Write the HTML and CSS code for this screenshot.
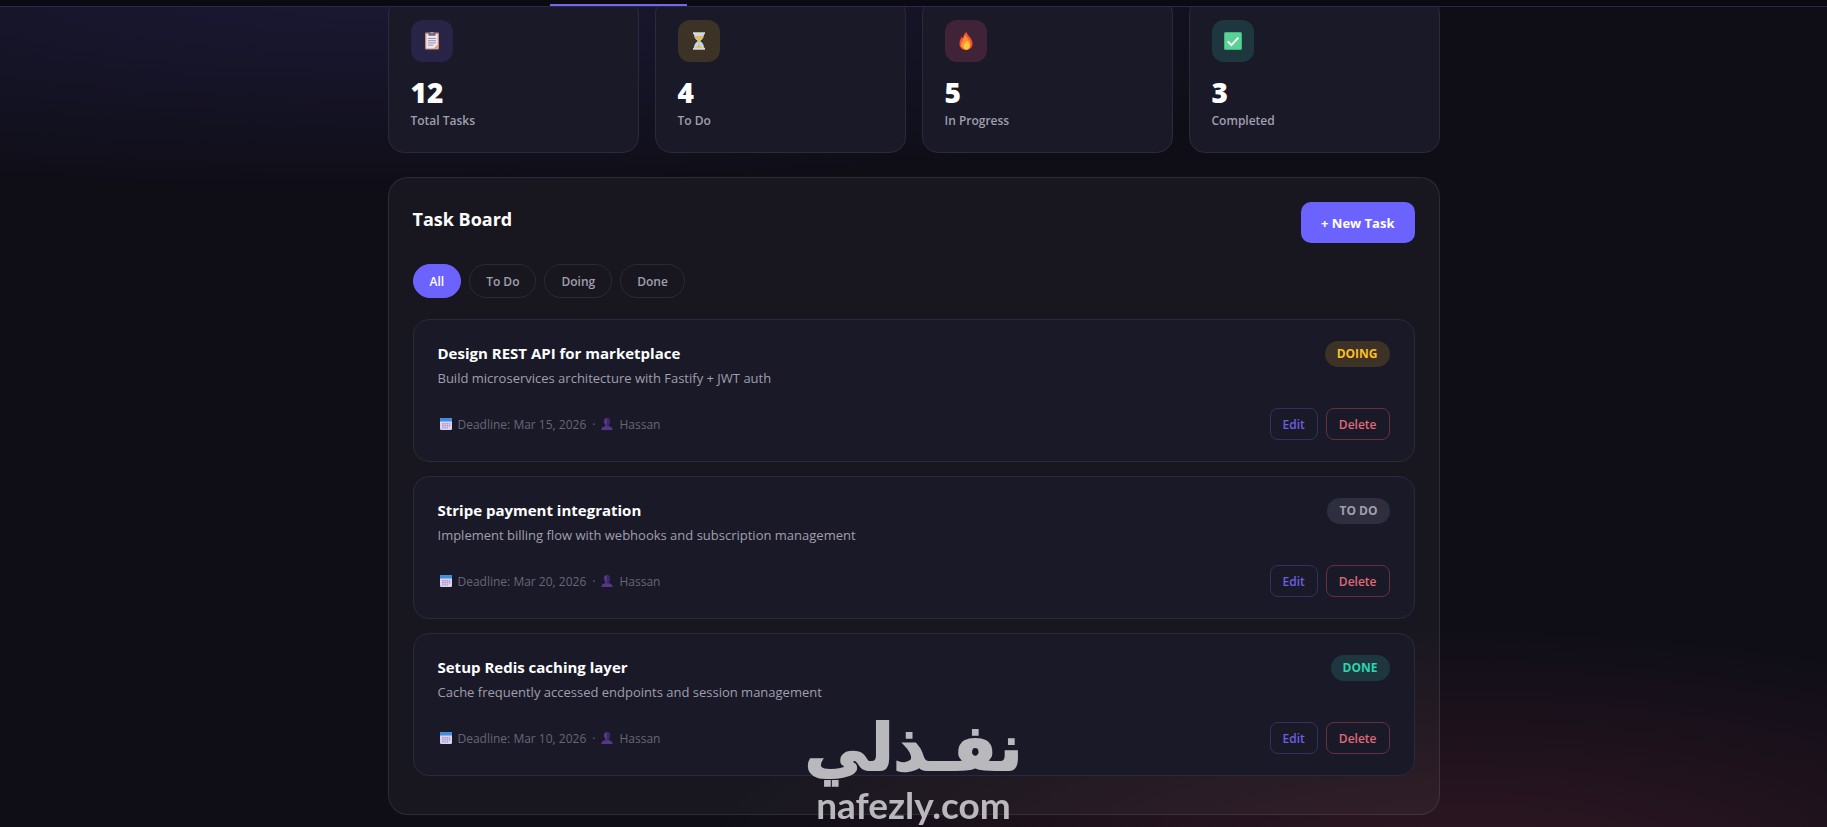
FILE: index.html
```html
<!DOCTYPE html>
<html lang="en">
<head>
  <meta charset="UTF-8" />
  <meta name="viewport" content="width=device-width, initial-scale=1.0" />
  <title>Task Board</title>
  <link rel="stylesheet" href="styles.css">
</head>
<body>
  <!-- shared icons -->
  <svg class="sprite" aria-hidden="true">
    <symbol id="calendar" viewBox="0 0 12 12">
      <rect width="12" height="12" rx="1.2" fill="#ddd3ee"/>
      <path d="M0 3.4V1.2A1.2 1.2 0 0 1 1.2 0h9.6A1.2 1.2 0 0 1 12 1.2v2.2z" fill="#3f8fe0"/>
      <path d="M2 5h1.6v1.4H2zM4.3 5h1.5v1.4H4.3zM6.5 5H8v1.4H6.5zM8.7 5h1.5v1.4H8.7zM2 7.1h1.6v1.4H2zM4.3 7.1h1.5v1.4H4.3zM6.5 7.1H8v1.4H6.5zM8.7 7.1h1.5v1.4H8.7zM2 9.2h1.6v1.2H2zM4.3 9.2h1.5v1.2H4.3zM6.5 9.2H8v1.2H6.5z" fill="#a99bc9"/>
    </symbol>
    <symbol id="person" viewBox="0 0 12 12">
      <path d="M6 0C4 0 2.9 1.3 2.9 3.3c0 1.500.5 2.800 1.500 3.600v1.200L1.600 9.200C.8 9.600.4 10.400.4 12h11.200c0-1.600-.4-2.400-1.200-2.800L7.600 8.100V6.900c1-.8 1.500-2.100 1.500-3.600C9.100 1.300 8 0 6 0z" fill="#553689"/>
      <path d="M6 0c2 0 3.100 1.300 3.100 3.300 0 1.500-.5 2.800-1.500 3.600v1.200l-1.600.9z" fill="#3d2768"/>
    </symbol>
  </svg>

  <header class="topbar">
    <nav class="tabs"><span class="tab-active"></span></nav>
  </header>

  <main class="container">
    <section class="stats">
      <div class="stat-card">
        <div class="stat-icon purple">
          <svg width="18" height="18" viewBox="0 0 18 18">
            <rect x="2" y=".5" width="14" height="17" rx="1" fill="#c98f6c"/>
            <rect x="3.3" y="2" width="11.4" height="14.5" fill="#efe4f2"/>
            <path d="M5.5.5h7v3.200h-7z" fill="#6d6478"/>
            <path d="M7.500 0h3v1.500h-3z" fill="#a79db0"/>
            <path d="M5 6.500h8M5 8.700h8M5 10.900h8M5 13.100h5.500" stroke="#8f88a8" stroke-width=".9"/>
            <path d="M14.700 12.500v4h-4z" fill="#e39a55"/>
          </svg>
        </div>
        <div class="stat-value">12</div>
        <div class="stat-label">Total Tasks</div>
      </div>
      <div class="stat-card">
        <div class="stat-icon amber">
          <svg width="18" height="18" viewBox="0 0 18 18">
            <path d="M4 2h10c0 3.500-1.200 5-3.800 7 2.600 2 3.800 3.500 3.800 7H4c0-3.500 1.200-5 3.800-7C5.200 7 4 5.500 4 2z" fill="#b5dff2"/>
            <path d="M4.800 4h8.400c-.6 2.200-2 3.200-3.700 4.600V13l3.300 3H5.200l3.300-3V8.600C6.800 7.200 5.400 6.200 4.800 4z" fill="#f3b64c"/>
            <path d="M3 .3h12v2H3zM3 15.700h12v2H3z" fill="#ddd5d6"/>
          </svg>
        </div>
        <div class="stat-value">4</div>
        <div class="stat-label">To Do</div>
      </div>
      <div class="stat-card">
        <div class="stat-icon red">
          <svg width="18" height="18" viewBox="0 0 18 18">
            <path d="M9.500 0c.4 2.400 2 3.400 3.400 5.300 1.400 1.900 2.600 3.900 2.600 6.200 0 3.900-2.700 6.500-6.500 6.500s-6.500-2.500-6.500-6.200c0-2.700.9-5 2.400-7l.9 1.800C6.300 4 7.300 1.300 9.500 0z" fill="#f4512c"/>
            <path d="M5.500 9c.2-2.300 1.500-4 3.500-6 .1 3 4.500 4.500 4.500 9 0 3.500-2 5.500-4.500 5.500S4 15.500 4 12.800C4 11 4.500 9.800 5.500 9z" fill="#ff8c38"/>
            <path d="M6.500 14c0-2.300 2.600-2.800 3.200-5.500 2 1.300 3.100 3.300 3.100 5.300 0 2.300-1.500 3.900-3.400 3.900S6.500 16.300 6.500 14z" fill="#ffcb3d"/>
          </svg>
        </div>
        <div class="stat-value">5</div>
        <div class="stat-label">In Progress</div>
      </div>
      <div class="stat-card">
        <div class="stat-icon green">
          <svg width="18" height="18" viewBox="0 0 18 18">
            <rect width="18" height="18" rx="1.5" fill="#3fb87c"/>
            <rect x="1" y="1" width="16" height="16" rx="1" fill="#5ad295"/>
            <path d="M3.800 9.300l3.600 3.800 7-7.500" fill="none" stroke="#fff" stroke-width="1.8"/>
          </svg>
        </div>
        <div class="stat-value">3</div>
        <div class="stat-label">Completed</div>
      </div>
    </section>

    <section class="panel">
      <div class="panel-head">
        <h2>Task Board</h2>
        <button class="btn-new">+ New Task</button>
      </div>

      <div class="filters">
        <button class="filter active">All</button>
        <button class="filter">To Do</button>
        <button class="filter">Doing</button>
        <button class="filter">Done</button>
      </div>

      <article class="task">
        <div class="task-top">
          <div>
            <h3>Design REST API for marketplace</h3>
            <p>Build microservices architecture with Fastify + JWT auth</p>
          </div>
          <span class="badge doing">DOING</span>
        </div>
        <div class="task-bottom">
          <div class="meta">
            <svg class="ico"><use href="#calendar"/></svg>
            <span>Deadline: Mar 15, 2026</span>
            <span class="dot">·</span>
            <svg class="ico"><use href="#person"/></svg>
            <span>Hassan</span>
          </div>
          <div class="actions">
            <button class="btn-edit">Edit</button>
            <button class="btn-delete">Delete</button>
          </div>
        </div>
      </article>

      <article class="task">
        <div class="task-top">
          <div>
            <h3>Stripe payment integration</h3>
            <p>Implement billing flow with webhooks and subscription management</p>
          </div>
          <span class="badge todo">TO DO</span>
        </div>
        <div class="task-bottom">
          <div class="meta">
            <svg class="ico"><use href="#calendar"/></svg>
            <span>Deadline: Mar 20, 2026</span>
            <span class="dot">·</span>
            <svg class="ico"><use href="#person"/></svg>
            <span>Hassan</span>
          </div>
          <div class="actions">
            <button class="btn-edit">Edit</button>
            <button class="btn-delete">Delete</button>
          </div>
        </div>
      </article>

      <article class="task">
        <div class="task-top">
          <div>
            <h3>Setup Redis caching layer</h3>
            <p>Cache frequently accessed endpoints and session management</p>
          </div>
          <span class="badge done">DONE</span>
        </div>
        <div class="task-bottom">
          <div class="meta">
            <svg class="ico"><use href="#calendar"/></svg>
            <span>Deadline: Mar 10, 2026</span>
            <span class="dot">·</span>
            <svg class="ico"><use href="#person"/></svg>
            <span>Hassan</span>
          </div>
          <div class="actions">
            <button class="btn-edit">Edit</button>
            <button class="btn-delete">Delete</button>
          </div>
        </div>
      </article>
    </section>
  </main>

  <div class="watermark">
    <span class="mark-ar" lang="ar" dir="rtl">نفـذلي</span>
    <span class="mark-en">nafezly.com</span>
  </div>
</body>
</html>
```
FILE: styles.css
```css
* {
  box-sizing: border-box;
  margin: 0;
  padding: 0;
}
body {
  font-family: "Open Sans", "Noto Sans", sans-serif;
  color: #fff;
  min-height: 100vh;
  background:
    radial-gradient(ellipse 60% 23% at 20% 0%, rgba(108, 99, 255, 0.12), transparent),
    radial-gradient(ellipse 42% 30% at 80% 106%, rgba(255, 80, 110, 0.14), transparent),
    #0f0e17;
}
button {
  font-family: inherit;
  cursor: pointer;
}
.sprite {
  position: absolute;
  width: 0;
  height: 0;
}

/* top bar */
.topbar {
  position: sticky;
  top: 0;
  z-index: 5;
  height: 7px;
  background: #0b0a12;
  border-bottom: 1px solid #2a2650;
}
.tabs {
  height: 6px;
  display: flex;
  align-items: flex-end;
  max-width: 727px;
  margin: 0 auto;
}
.tab-active {
  width: 137px;
  height: 2px;
  background: #7468e8;
}

.container {
  max-width: 1100px;
  margin: -10px auto 0;
  padding: 0 24px 12px;
}

/* stats */
.stats {
  display: grid;
  grid-template-columns: repeat(4, 1fr);
  gap: 16px;
  margin-bottom: 24px;
}
.stat-card {
  padding: 22px 22px 20px;
  background: #1a1928;
  border: 1px solid #2b2a38;
  border-radius: 16px;
}
.stat-icon {
  width: 42px;
  height: 42px;
  border-radius: 12px;
  display: flex;
  align-items: center;
  justify-content: center;
  margin-bottom: 12px;
}
.purple { background: #272448; }
.amber { background: #3c3226; }
.red { background: #412338; }
.green { background: #1e373e; }
.stat-value {
  font-size: 28px;
  font-weight: 800;
  line-height: 36px;
}
.stat-label {
  font-size: 12px;
  font-weight: 600;
  line-height: 22px;
  color: #a09fad;
}

/* board */
.panel {
  padding: 24px;
  background: rgba(255, 255, 255, 0.04);
  border: 1px solid rgba(255, 255, 255, 0.09);
  border-radius: 20px;
}
.panel-head {
  display: flex;
  justify-content: space-between;
  align-items: flex-start;
  margin-bottom: 21px;
}
.panel-head h2 {
  font-size: 18px;
  font-weight: 700;
  line-height: 34px;
}
.btn-new {
  height: 41px;
  padding: 0 20px;
  border: none;
  border-radius: 10px;
  background: #6c63ff;
  color: #fff;
  font-size: 13px;
  font-weight: 700;
}
.filters {
  display: flex;
  gap: 8px;
  margin-bottom: 21px;
}
.filter {
  height: 34px;
  padding: 0 16px;
  border: 1px solid #2b2a35;
  border-radius: 17px;
  background: none;
  color: #a09fad;
  font-size: 12px;
  font-weight: 600;
}
.filter.active {
  background: #6c63ff;
  border-color: #6c63ff;
  color: #fff;
}

.task {
  padding: 21px 24px;
  margin-bottom: 14px;
  background: #1a1928;
  border: 1px solid #2b2a38;
  border-radius: 16px;
}
.task-top,
.task-bottom {
  display: flex;
  justify-content: space-between;
}
.task-top {
  align-items: flex-start;
  margin-bottom: 18px;
}
.task-bottom {
  align-items: center;
}
.task h3 {
  font-size: 15px;
  font-weight: 700;
  line-height: 25px;
}
.task p {
  font-size: 13px;
  line-height: 24px;
  color: #a09fad;
}
.badge {
  padding: 0 12px;
  border-radius: 13px;
  font-size: 12px;
  font-weight: 700;
  line-height: 26px;
}
.doing { background: #3c3226; color: #fbbf24; }
.todo { background: #2f2e3e; color: #a09fad; }
.done { background: #1e373e; color: #2dd4b0; }

.meta {
  display: flex;
  align-items: center;
  gap: 6px;
  padding-left: 2px;
  font-size: 12px;
  color: #686676;
}
.ico {
  width: 12px;
  height: 12px;
}
.actions {
  display: flex;
  gap: 8px;
}
.btn-edit,
.btn-delete {
  height: 32px;
  padding: 0 12px;
  border-radius: 8px;
  background: none;
  font-size: 12px;
  font-weight: 600;
}
.btn-edit {
  border: 1px solid #353063;
  color: #6c5fe0;
}
.btn-delete {
  border: 1px solid #653046;
  color: #e06a78;
}

/* site mark over the page */
.watermark {
  position: fixed;
  left: 0;
  right: 0;
  bottom: 0;
  z-index: 10;
  display: flex;
  flex-direction: column;
  align-items: center;
  color: #b9b8bd;
  pointer-events: none;
}
.mark-ar {
  font-family: "DejaVu Sans", sans-serif;
  font-size: 64px;
  font-weight: 700;
  line-height: 70px;
  -webkit-text-stroke: 2px #b9b8bd;
}
.mark-en {
  font-family: Lato, sans-serif;
  font-size: 37px;
  font-weight: 700;
  line-height: 44px;
}
```
